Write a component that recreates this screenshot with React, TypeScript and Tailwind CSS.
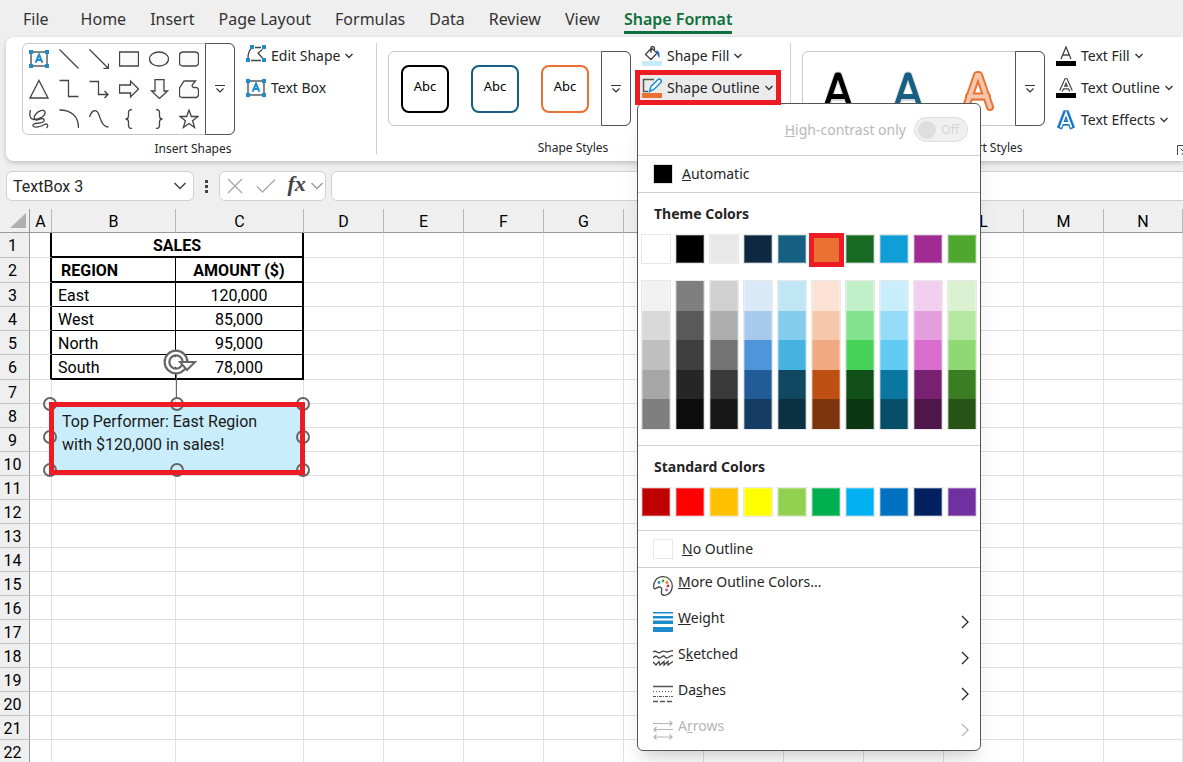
import type { ReactNode } from "react";

const tabs = ["Home", "Insert", "Page Layout", "Formulas", "Data", "Review", "View"];

const columns = ["A", "B", "C", "D", "E", "F", "G", "H", "I", "J", "K", "L", "M", "N"];

const sales = [
    { region: "East", amount: "120,000" },
    { region: "West", amount: "85,000" },
    { region: "North", amount: "95,000" },
    { region: "South", amount: "78,000" },
];

const themeColors = [
    { name: "White", base: "bg-white", shades: ["bg-[#f2f2f2]", "bg-[#d9d9d9]", "bg-[#bfbfbf]", "bg-[#a6a6a6]", "bg-[#7f7f7f]"] },
    { name: "Black", base: "bg-black", shades: ["bg-[#7f7f7f]", "bg-[#595959]", "bg-[#3f3f3f]", "bg-[#262626]", "bg-[#0c0c0c]"] },
    { name: "Light Gray", base: "bg-[#e8e8e8]", shades: ["bg-[#d0d0d0]", "bg-[#adadad]", "bg-[#747474]", "bg-[#3a3a3a]", "bg-[#171717]"] },
    { name: "Dark Blue", base: "bg-[#0e2841]", shades: ["bg-[#dae9f8]", "bg-[#a6c9ec]", "bg-[#4e95d9]", "bg-[#215c98]", "bg-[#153d64]"] },
    { name: "Teal", base: "bg-[#156082]", shades: ["bg-[#c0e6f5]", "bg-[#83cceb]", "bg-[#44b3e1]", "bg-[#104861]", "bg-[#0b3041]"] },
    { name: "Orange", base: "bg-[#e97132]", shades: ["bg-[#fbe2d5]", "bg-[#f7c7ac]", "bg-[#f1a983]", "bg-[#be5014]", "bg-[#7e350e]"] },
    { name: "Green", base: "bg-[#196b24]", shades: ["bg-[#c1f0c8]", "bg-[#83e28e]", "bg-[#47d359]", "bg-[#12501a]", "bg-[#0c3512]"] },
    { name: "Blue", base: "bg-[#0f9ed5]", shades: ["bg-[#caedfb]", "bg-[#94dcf8]", "bg-[#61cbf3]", "bg-[#0b769f]", "bg-[#074f69]"] },
    { name: "Purple", base: "bg-[#a02b93]", shades: ["bg-[#f2ceef]", "bg-[#e49edd]", "bg-[#d86dcd]", "bg-[#782170]", "bg-[#4f164a]"] },
    { name: "Lime", base: "bg-[#4ea72e]", shades: ["bg-[#daf2d0]", "bg-[#b5e6a2]", "bg-[#8ed973]", "bg-[#3a7d22]", "bg-[#275317]"] },
];

const standardColors = [
    { name: "Dark Red", color: "bg-[#c00000]" },
    { name: "Red", color: "bg-[#ff0000]" },
    { name: "Gold", color: "bg-[#ffc000]" },
    { name: "Yellow", color: "bg-[#ffff00]" },
    { name: "Light Green", color: "bg-[#92d050]" },
    { name: "Green", color: "bg-[#00b050]" },
    { name: "Light Blue", color: "bg-[#00b0f0]" },
    { name: "Blue", color: "bg-[#0070c0]" },
    { name: "Dark Blue", color: "bg-[#002060]" },
    { name: "Purple", color: "bg-[#7030a0]" },
];

/* ICONS */

function TextBoxIcon() {
    return (
        <svg width="20" height="20" viewBox="0 0 20 20" fill="none">
            <rect x="2" y="3" width="16" height="14" fill="#fafafa" stroke="#444" strokeWidth="1.3" />
            <path d="M6.6 13.7 10 5.500l3.400 8.200M7.800 11h4.400" stroke="#1e8bcd" strokeWidth="2" />
            <path d="M0 1h4v4H0zM16 1h4v4h-4zM0 15h4v4H0zM16 15h4v4h-4z" fill="#1e8bcd" />
        </svg>
    );
}

const shapes: { name: string; d: string; fill?: boolean }[] = [
    { name: "Line", d: "M0.5 0.5 19.5 19.5" },
    { name: "Arrow", d: "M0.5 0.5 19.5 19.5M19.5 14.5v5h-5" },
    { name: "Rectangle", d: "M0.5 3h19v14h-19z", fill: true },
    { name: "Oval", d: "M10 3c5.3 0 9.5 3 9.5 7s-4.2 7-9.5 7S.5 14 .5 10 4.7 3 10 3z", fill: true },
    { name: "Rounded Rectangle", d: "M4 3h12q3.5 0 3.5 3.5v7q0 3.5-3.5 3.5H4q-3.5 0-3.5-3.5v-7Q.5 3 4 3z", fill: true },
    { name: "Triangle", d: "M10 1.5 19 19H1z", fill: true },
    { name: "Elbow Connector", d: "M0.5 1.5h9v16h10" },
    { name: "Elbow Arrow", d: "M0.5 2.5h9v13h9.5M15.500 12l3.500 3.500-3.500 3.500" },
    { name: "Right Arrow", d: "M0.5 6h11V2l8 8-8 8v-4H.5z", fill: true },
    { name: "Down Arrow", d: "M6 .5h9v11.500h3.500l-8 7.500-8-7.500H6z", fill: true },
    { name: "Freeform", d: "M5 2h11.5l-3 3.500c-1 2 .5 3.500 2.500 3 2-.5 3.500 1 3.500 3v5l-2 2H3q-2.500 0-2.500-2.500V9z", fill: true },
    { name: "Scribble", d: "M1.500 1C0 6 1 10.500 5 10.500c5 0 12-3.500 11-7.500-1-3.500-7-1-9.500 2.500-3 4 0 6.500 3.500 5 3-1.500 6-1 5 1.500-2 3.500-11.500 1-11 4.500.5 3 8.500 1 11.500-1 2.500-1.500 4.500 1 2 3.500" },
    { name: "Arc", d: "M0.500 1C12 1 19.500 7 19.500 19" },
    { name: "Curve", d: "M0.500 8C3 0 8 0 10 6c3 9 5 12 9.500 12" },
    { name: "Left Brace", d: "M13 .5c-3 0-3.500 1-3.500 3V7c0 2-.5 3-3 3 2.500 0 3 1 3 3v3.500c0 2 .5 3 3.500 3" },
    { name: "Right Brace", d: "M7 .5c3 0 3.500 1 3.500 3V7c0 2 .5 3 3 3-2.500 0-3 1-3 3v3.500c0 2-.5 3-3.500 3" },
    { name: "Star", d: "M10 1l2.300 6.500h6.700l-5.400 4.200 2 6.800L10 14.500l-5.600 4 2-6.800L1 7.500h6.700z", fill: true },
];

function Chevron() {
    return (
        <svg width="8" height="6" viewBox="0 0 8 6" fill="none" className="shrink-0">
            <path d="M.5 1 4 4.500 7.500 1" stroke="#333" strokeWidth="1.3" />
        </svg>
    );
}

function EditShapeIcon() {
    return (
        <svg width="20" height="20" viewBox="0 0 20 20" fill="none" className="-mt-1">
            <path d="M2 14c0-4 1-7 3-9M9 3.500h6M16.500 5.500 12 9l4.500 5M5 16.500h10" stroke="#444" strokeWidth="1.3" />
            <path d="M4 1h4v4H4zM16 1h4v4h-4zM0 14h4v4H0zM16 14h4v4h-4z" fill="#1e8bcd" />
        </svg>
    );
}

function FillIcon() {
    return (
        <svg width="20" height="20" viewBox="0 0 20 20" fill="none">
            <path d="M9.500 2 3.500 8.500l5.500 5 6-6.500L9.500 2M9 7V2Q9 .5 10.500.5T12.500 2v4" stroke="#444" strokeWidth="1.3" />
            <path d="M14 4.500c3 0 4 2 3.500 7.500-1.500-1-2-3-2.500-5z" fill="#1e6fb8" />
            <path d="M0 15h20v5H0z" fill="#c5ebf9" />
        </svg>
    );
}

function OutlineIcon() {
    return (
        <svg width="20" height="20" viewBox="0 0 20 20" fill="none">
            <path d="M12 1.500H1.500v12H6" stroke="#555" strokeWidth="1.5" />
            <path d="M7.500 13.500 9 8.500l7-7q1.500-1 2.800.3 1.200 1.500 0 2.700l-7 7z" fill="#fff" stroke="#1e8bcd" strokeWidth="1.5" />
            <path d="M0 15h20v5H0z" fill="#e97132" />
        </svg>
    );
}

function TextFillIcon() {
    return (
        <svg width="20" height="20" viewBox="0 0 20 20" fill="none">
            <path d="M5 13 10 1l5 12M6.700 9h6.600" stroke="#444" strokeWidth="1.3" />
            <path d="M0 15h20v5H0z" fill="#000" />
        </svg>
    );
}

function TextOutlineIcon() {
    return (
        <svg width="20" height="20" viewBox="0 0 20 20" fill="none">
            <path d="M5 13 10 2l5 11M6.700 9.500h6.600" stroke="#444" strokeWidth="4" />
            <path d="M5 13 10 2l5 11M6.700 9.500h6.600" stroke="#fff" strokeWidth="1.6" />
            <path d="M0 15h20v5H0z" fill="#000" />
        </svg>
    );
}

function TextEffectsIcon() {
    return (
        <svg width="20" height="20" viewBox="0 0 20 20" fill="none">
            <path d="M3.500 18.500 9.500 2h1l6 16.500M6 13h8" stroke="#a5d3f2" strokeWidth="6" />
            <path d="M3.500 18.500 9.500 3h1l6 15.500M6 13h8" stroke="#1572c4" strokeWidth="5" />
            <path d="M4.500 17.500 10 3l5.500 14.500M6.500 13h7" stroke="#fff" strokeWidth="1.8" />
        </svg>
    );
}

function PaletteIcon() {
    return (
        <svg width="20" height="20" viewBox="0 0 20 20" fill="none">
            <path d="M1 12.500C-.5 6 4 .7 10 .7c5.500 0 9.300 4 9.300 9.300 0 5-3.500 9.300-7.800 9.300-2.500 0-3.500-1.500-3-3.800.5-2.500 0-4.500-2-4.500-2.500 0-4.500 3-5.500 1.500z" stroke="#444" strokeWidth="1.3" />
            <circle cx="6" cy="6.5" r="1.4" fill="#1e8bcd" />
            <circle cx="10" cy="5" r="1.4" fill="#4ea72e" />
            <circle cx="14" cy="6.5" r="1.4" fill="#e97132" />
            <circle cx="15" cy="10" r="1.4" fill="#e03030" />
            <circle cx="13.5" cy="14" r="1.4" fill="#a05bc0" />
        </svg>
    );
}

function WeightIcon() {
    return (
        <svg width="20" height="20" viewBox="0 0 20 20">
            <path d="M0 0h20v1H0zM0 4h20v2H0zM0 9h20v3H0zM0 15h20v5H0z" fill="#1e8bcd" />
            <path d="M0 1h20v1H0zM0 6h20v1H0zM0 8h20v1H0z" fill="#8ec5e6" />
        </svg>
    );
}

function SketchedIcon() {
    return (
        <svg width="20" height="20" viewBox="0 0 20 20" fill="none" stroke="#444" strokeWidth="1.3">
            <path d="M0 4q2-1.500 4 0t4 0 4-.5 4 0 4-.5" />
            <path d="M0 10q3-3 4.500-1t4 0 3.500 0 4 0 4-1" />
            <path d="M0 14l3 3 3-3.500 1 3.500 4-3.500v3.500l4-3.500v3.500l5-3.500" />
        </svg>
    );
}

function DashesIcon() {
    return (
        <svg width="20" height="20" viewBox="0 0 20 20" fill="none" stroke="#555">
            <path d="M0 2.500h20" strokeWidth="1.5" />
            <path d="M0 7.500h20" strokeDasharray="1 2" />
            <path d="M0 12.500h20" strokeDasharray="3 1 1 1" />
            <path d="M0 17.500h20" strokeDasharray="5 2" strokeWidth="1.5" />
        </svg>
    );
}

function ArrowsIcon() {
    return (
        <svg width="20" height="20" viewBox="0 0 20 20" fill="none" stroke="#b5b5b5" strokeWidth="1.2">
            <path d="M0 3.500h19M16.500 1l2.500 2.500L16.500 6" />
            <path d="M1 9.500h19M3.500 7 1 9.500 3.500 12" />
            <path d="M1 17h18M3.500 14.500 1 17l2.500 2.500M16.500 14.500 19 17l-2.500 2.500" />
        </svg>
    );
}

/* RIBBON */

function MoreButton({ label }: { label: string }) {
    return (
        <button
            aria-label={label}
            className="-my-px -mr-px flex w-[30px] items-center justify-center rounded-r-md border border-[#555]"
        >
            <svg width="10" height="8" viewBox="0 0 10 8" fill="none">
                <path d="M0 .5h10M1.500 3.500 5 7l3.500-3.500" stroke="#333" strokeWidth="1.2" />
            </svg>
        </button>
    );
}

function Command({ icon, label, menu = true }: { icon: ReactNode; label: string; menu?: boolean }) {
    return (
        <button className="flex h-8 items-center whitespace-nowrap text-sm text-[#262626]">
            {icon}
            <span className="mx-[5px]">{label}</span>
            {menu && <Chevron />}
        </button>
    );
}

function WordArt({ main, edge }: { main: string; edge?: string }) {
    return (
        <button aria-label="WordArt style" className="flex h-full w-[70px] items-center justify-center">
            <svg width="36" height="44" viewBox="0 0 36 44" fill="none" strokeLinejoin="round">
                <path d="M6 41 17 8h2l11 33M9 30.500h18" stroke="#000" strokeOpacity=".15" strokeWidth="7" />
                <path d="M6 40 17 8h2l11 32M9 29.500h18" stroke={main} strokeWidth={edge ? 8 : 5} strokeLinecap={edge ? "round" : "butt"} />
                {edge && <path d="M6 40 17 8h2l11 32M9 29.500h18" stroke={edge} strokeWidth="4" strokeLinecap="round" />}
            </svg>
        </button>
    );
}

function Swatch({ name, color }: { name: string; color: string }) {
    return (
        <button aria-label={name} className="block size-[30px] border border-[#e8e8e8]">
            <span className={`block size-full border border-white/30 ${color}`} />
        </button>
    );
}

function MenuItem({ icon, disabled, arrow = true, children }: {
    icon: ReactNode;
    disabled?: boolean;
    arrow?: boolean;
    children: ReactNode;
}) {
    return (
        <button
            disabled={disabled}
            className="flex h-9 w-full items-center pl-[15px] pr-[11px] text-left text-sm text-[#262626] disabled:text-[#b5b5b5]"
        >
            {icon}
            <span className="ml-[5px] flex-1 pb-2">{children}</span>
            {arrow && (
                <svg width="8" height="14" viewBox="0 0 8 14" fill="none" stroke="currentColor" strokeWidth="1.3">
                    <path d="M1 1l6 6-6 6" />
                </svg>
            )}
        </button>
    );
}

function OutlineMenu() {
    return (
        <div className="absolute left-0 top-[33px] z-20 w-[344px] rounded-md border border-[#555] bg-white pb-0.5 text-sm text-[#262626] shadow-xl">
            <div className="flex h-[52px] items-center justify-end gap-2 border-b border-[#d0d0d0] pr-3 text-[#b8b8b8]">
                <span id="contrast"><u>H</u>igh-contrast only</span>
                <button
                    role="switch"
                    aria-checked="false"
                    aria-labelledby="contrast"
                    disabled
                    className="flex h-[25px] w-[54px] items-center justify-between rounded-full border border-[#dcdcdc] bg-[#f0f0f0] pl-[3px] pr-2 text-xs text-[#d5d5d5]"
                >
                    <span className="size-[18px] rounded-full bg-[#dedede]" />
                    Off
                </button>
            </div>
            <button className="flex h-[37px] w-full items-center gap-[9px] border-b border-[#d0d0d0] pl-[15px]">
                <span className="size-5 border border-[#e0e0e0] bg-black" />
                <span><u>A</u>utomatic</span>
            </button>

            {/* THEME COLORS */}
            <div className="border-b border-[#d0d0d0] px-[3px] pb-[15px]">
                <h2 className="flex h-[41px] items-center pl-[13px] font-bold">Theme Colors</h2>
                <div className="flex justify-between">
                    {themeColors.map((item) => (
                        <div key={item.name} className="relative h-[30px]">
                            <Swatch name={item.name} color={item.base} />
                            {item.name === "Orange" && (
                                <div className="absolute -left-0.5 -top-px h-[34px] w-[35px] border-5 border-[#ed1c24]" />
                            )}
                        </div>
                    ))}
                </div>
                <div className="mt-4 flex justify-between">
                    {themeColors.map((item) => (
                        <div key={item.name} className="flex h-[150px] w-[30px] flex-col border border-[#e8e8e8]">
                            {item.shades.map((shade, index) => (
                                <button
                                    key={shade}
                                    aria-label={`${item.name} ${index + 1}`}
                                    className={`flex-1 border-x border-white/30 ${shade}`}
                                />
                            ))}
                        </div>
                    ))}
                </div>
            </div>

            {/* STANDARD COLORS */}
            <div className="border-b border-[#d0d0d0] px-[3px] pb-[13px]">
                <h2 className="flex h-[41px] items-center pl-[13px] font-bold">Standard Colors</h2>
                <div className="flex justify-between">
                    {standardColors.map((item) => (
                        <Swatch key={item.name} name={item.name} color={item.color} />
                    ))}
                </div>
            </div>

            <button className="flex h-[37px] w-full items-center gap-[9px] border-b border-[#d0d0d0] pl-[15px]">
                <span className="size-5 border border-[#e8e8e8] bg-white" />
                <span><u>N</u>o Outline</span>
            </button>
            <MenuItem icon={<PaletteIcon />} arrow={false}><u>M</u>ore Outline Colors...</MenuItem>
            <MenuItem icon={<WeightIcon />}><u>W</u>eight</MenuItem>
            <MenuItem icon={<SketchedIcon />}>S<u>k</u>etched</MenuItem>
            <MenuItem icon={<DashesIcon />}>Da<u>s</u>hes</MenuItem>
            <MenuItem icon={<ArrowsIcon />} disabled>A<u>r</u>rows</MenuItem>
        </div>
    );
}

function Launcher() {
    return (
        <svg width="12" height="12" viewBox="0 0 12 12" fill="none" stroke="#444" className="mt-1">
            <path d="M1.500 11V1.500H11M4.500 4.500 10 10M10 5.500V10H5.500" />
        </svg>
    );
}

function Ribbon() {
    return (
        <div className="ml-1.5 flex h-[124px] rounded-l-lg bg-white pl-4 pt-1.5 text-[#262626] shadow-[0_2px_5px_rgba(0,0,0,0.2)]">
            {/* INSERT SHAPES */}
            <div className="flex w-[342px] shrink-0 flex-col">
                <div className="flex h-[92px]">
                    <div className="flex rounded-md border border-[#c8c8c8] pl-px">
                        <div className="mr-px grid grid-cols-6">
                            <button aria-label="Text Box" className="flex size-[30px] items-center justify-center">
                                <TextBoxIcon />
                            </button>
                            {shapes.map((shape) => (
                                <button key={shape.name} aria-label={shape.name} className="flex size-[30px] items-center justify-center">
                                    <svg width="20" height="20" viewBox="0 0 20 20" fill={shape.fill ? "#fafafa" : "none"} stroke="#444" strokeWidth="1.3">
                                        <path d={shape.d} />
                                    </svg>
                                </button>
                            ))}
                        </div>
                        <MoreButton label="More shapes" />
                    </div>
                    <div className="-mt-[3px] ml-[11px]">
                        <Command icon={<EditShapeIcon />} label="Edit Shape" />
                        <Command icon={<TextBoxIcon />} label="Text Box" menu={false} />
                    </div>
                </div>
                <div className="mt-1.5 text-center text-xs">Insert Shapes</div>
            </div>
            <div className="ml-3 h-[111px] w-px shrink-0 bg-[#d0d0d0]" />

            {/* SHAPE STYLES */}
            <div className="ml-[11px] flex w-[390px] shrink-0 flex-col">
                <div className="flex h-[92px] items-start">
                    <div className="mt-2 flex h-[75px] rounded-md border border-[#c8c8c8] pl-3">
                        <div className="mr-3 flex items-center gap-[22px] text-[13px] text-black">
                            <button className="size-12 rounded-lg border-2 border-black pb-1">Abc</button>
                            <button className="size-12 rounded-lg border-2 border-[#156082] pb-1">Abc</button>
                            <button className="size-12 rounded-lg border-2 border-[#e97132] pb-1">Abc</button>
                        </div>
                        <MoreButton label="More shape styles" />
                    </div>
                    <div className="-mt-[3px] ml-1">
                        <div className="pl-[7px]">
                            <Command icon={<FillIcon />} label="Shape Fill" />
                        </div>
                        <div className="relative ml-0.5">
                            <div className="relative z-30 -ml-0.5 -mt-0.5 flex h-[35px] w-[146px] items-center border-5 border-[#ed1c24] bg-[#ebebeb] pl-0.5">
                                <Command icon={<OutlineIcon />} label="Shape Outline" />
                            </div>
                            <OutlineMenu />
                        </div>
                    </div>
                </div>
                <div className="mt-[5px] pr-5 text-center text-xs">Shape Styles</div>
            </div>
            <div className="ml-3 h-[111px] w-px shrink-0 bg-[#d0d0d0]" />

            {/* WORDART STYLES */}
            <div className="ml-[11px] flex w-[386px] shrink-0 flex-col">
                <div className="flex h-[92px] items-start">
                    <div className="mt-2 flex h-[75px] rounded-md border border-[#c8c8c8]">
                        <div className="mr-0.5 flex">
                            <WordArt main="#000" />
                            <WordArt main="#156082" />
                            <WordArt main="#e97132" edge="#f7c7ac" />
                        </div>
                        <MoreButton label="More WordArt styles" />
                    </div>
                    <div className="-mt-[3px] ml-[11px]">
                        <Command icon={<TextFillIcon />} label="Text Fill" />
                        <Command icon={<TextOutlineIcon />} label="Text Outline" />
                        <Command icon={<TextEffectsIcon />} label="Text Effects" />
                    </div>
                </div>
                <div className="mt-[5px] flex">
                    <div className="flex-1 pr-4 text-center text-xs">WordArt Styles</div>
                    <Launcher />
                </div>
            </div>
        </div>
    );
}

/* FORMULA BAR */

function FormulaBar() {
    return (
        <div className="mt-2.5 flex h-[30px] items-stretch pl-1.5">
            <div className="flex w-[188px] items-center rounded-md border border-[#d0d0d0] bg-white px-1.5">
                <input
                    aria-label="Name box"
                    defaultValue="TextBox 3"
                    className="w-full min-w-0 pt-0.5 font-[Roboto,'Open_Sans',sans-serif] text-base text-[#262626] outline-none"
                />
                <svg width="14" height="8" viewBox="0 0 14 8" fill="none" className="shrink-0">
                    <path d="M1.500 1 7 6.500 12.500 1" stroke="#444" strokeWidth="1.5" />
                </svg>
            </div>
            <svg width="25" height="30" viewBox="0 0 25 30" fill="#444">
                <path d="M11 9h3v3h-3zM11 14h3v3h-3zM11 19h3v3h-3z" />
            </svg>
            <div className="flex w-[107px] items-center justify-between rounded-md border border-[#d0d0d0] bg-white pl-[7px] pr-0.5">
                <button aria-label="Cancel">
                    <svg width="16" height="16" viewBox="0 0 16 16" fill="none" stroke="#aaa" strokeWidth="1.4">
                        <path d="M1 1l14 14M15 1 1 15" />
                    </svg>
                </button>
                <button aria-label="Enter" className="pl-2">
                    <svg width="20" height="16" viewBox="0 0 20 16" fill="none" stroke="#aaa" strokeWidth="1.4">
                        <path d="M1 8.500 6.500 14 19 1.500" />
                    </svg>
                </button>
                <button className="pb-1 pl-1.5 font-[Liberation_Serif,serif] text-[22px] font-bold italic leading-6 text-[#444]">fx</button>
                <svg width="12" height="8" viewBox="0 0 12 8" fill="none" stroke="#999" strokeWidth="1.3">
                    <path d="M.5 1 6 6.500 11.500 1" />
                </svg>
            </div>
            <input
                aria-label="Formula"
                className="-mr-1.5 ml-[5px] min-w-0 flex-1 rounded-md border border-[#d0d0d0] bg-white outline-none"
            />
        </div>
    );
}

/* SHEET */

function SheetRow({ row }: { row: number }) {
    const entry = sales[row - 3];
    const inTable = row <= 6;
    const thick = row <= 2 || row === 6;
    const line = inTable ? (thick ? "border-b-2 border-b-black" : "border-b border-b-black") : "border-b border-b-[#e0e0e0]";

    return (
        <tr className={thick ? "h-[25px]" : "h-6"}>
            <th className="border-b border-r border-b-[#c4c4c4] border-r-[#999] bg-[#efefef] pb-0 pl-0 pr-1 pt-0.5 font-normal">
                {row}
            </th>
            <td className={`border-b border-b-[#e0e0e0] ${inTable ? "border-r-2 border-r-black" : "border-r border-r-[#e0e0e0]"}`} />
            {row === 1 && (
                <td colSpan={2} className={`border-r-2 border-r-black pt-0.5 text-center font-bold ${line}`}>SALES</td>
            )}
            {row === 2 && (
                <>
                    <td className={`border-r border-r-black pl-[9px] pt-0.5 font-bold ${line}`}>REGION</td>
                    <td className={`border-r-2 border-r-black pt-0.5 text-center font-bold ${line}`}>AMOUNT ($)</td>
                </>
            )}
            {entry && (
                <>
                    <td className={`border-r border-r-black pl-1.5 pt-0.5 ${line}`}>{entry.region}</td>
                    <td className={`border-r-2 border-r-black pt-0.5 text-center ${line}`}>{entry.amount}</td>
                </>
            )}
            {row > 6 && (
                <>
                    <td className={`border-r border-r-[#e0e0e0] ${line}`} />
                    <td className={`border-r border-r-[#e0e0e0] ${line}`} />
                </>
            )}
            {columns.slice(3).map((column) => (
                <td key={column} className="border-b border-r border-[#e0e0e0]" />
            ))}
        </tr>
    );
}

const handles = [
    [9, 50], [136, 50], [262, 50],
    [9, 83], [262, 83],
    [9, 116], [136, 116], [262, 116],
];

function SelectedTextBox() {
    return (
        <div className="absolute left-[41px] top-[145px] h-[124px] w-[272px]">
            <svg width="272" height="124" viewBox="0 0 272 124" fill="none" overflow="visible" className="absolute inset-0">
                <path d="M10 50h252v66H10z" fill="#caedfb" />
                <path d="M135.500 20v24" stroke="#666" />
                <g stroke="#666" strokeWidth="2">
                    {handles.map(([x, y]) => (
                        <circle key={`${x}-${y}`} cx={x} cy={y} r="6" />
                    ))}
                </g>
                <circle cx="135" cy="8" r="9" stroke="#666" strokeWidth="7" />
                <circle cx="135" cy="8" r="9" stroke="#fff" strokeWidth="2.5" />
                <circle cx="135" cy="8" r="5" fill="#fff" />
                <path d="M139 8h15l-8 8z" fill="#fff" stroke="#666" strokeWidth="2" />
            </svg>
            <div className="absolute left-2 top-12 h-[73px] w-64 border-5 border-[#ed1c24] pl-2 pr-8 pt-[3px] text-base leading-[23px] text-[#1a1a1a]">
                Top Performer: East Region with $120,000 in sales!
            </div>
        </div>
    );
}

function Sheet() {
    return (
        <div className="relative mt-2 font-[Roboto,'Open_Sans',sans-serif]">
            <table className="w-full table-fixed border-separate border-spacing-0 bg-white text-base leading-5 text-black">
                <colgroup>
                    <col className="w-[30px]" />
                    <col className="w-[22px]" />
                    <col className="w-[124px]" />
                    <col className="w-32" />
                    {columns.slice(3, -1).map((column) => (
                        <col key={column} className="w-20" />
                    ))}
                    <col />
                </colgroup>
                <thead>
                    <tr className="h-6 bg-[#efefef]">
                        <th className="border-b border-r border-[#999] p-0">
                            <svg width="16" height="15" viewBox="0 0 16 15" className="ml-2.5">
                                <path d="M16 0v15H0z" fill="#b0b0b0" />
                            </svg>
                        </th>
                        {columns.map((column) => (
                            <th key={column} className="border-b border-r border-b-[#999] border-r-[#b8b8b8] px-0 pb-0 pt-0.5 font-normal">
                                {column}
                            </th>
                        ))}
                    </tr>
                </thead>
                <tbody>
                    {Array.from({ length: 22 }, (_, index) => (
                        <SheetRow key={index} row={index + 1} />
                    ))}
                </tbody>
            </table>
            <SelectedTextBox />
        </div>
    );
}

export default function App() {
    return (
        <div className="h-screen overflow-hidden bg-[#efefef] font-['Noto_Sans','Open_Sans',sans-serif]">
            {/* TABS */}
            <nav className="flex h-[37px] items-center gap-6 whitespace-nowrap pl-[23px] text-base text-[#333]">
                <button className="mr-2">File</button>
                {tabs.map((tab) => (
                    <button key={tab}>{tab}</button>
                ))}
                <button className="mt-[3px] border-b-3 border-[#0f703b] font-semibold text-[#0f703b]">Shape Format</button>
            </nav>
            <Ribbon />
            <FormulaBar />
            <Sheet />
        </div>
    );
}
